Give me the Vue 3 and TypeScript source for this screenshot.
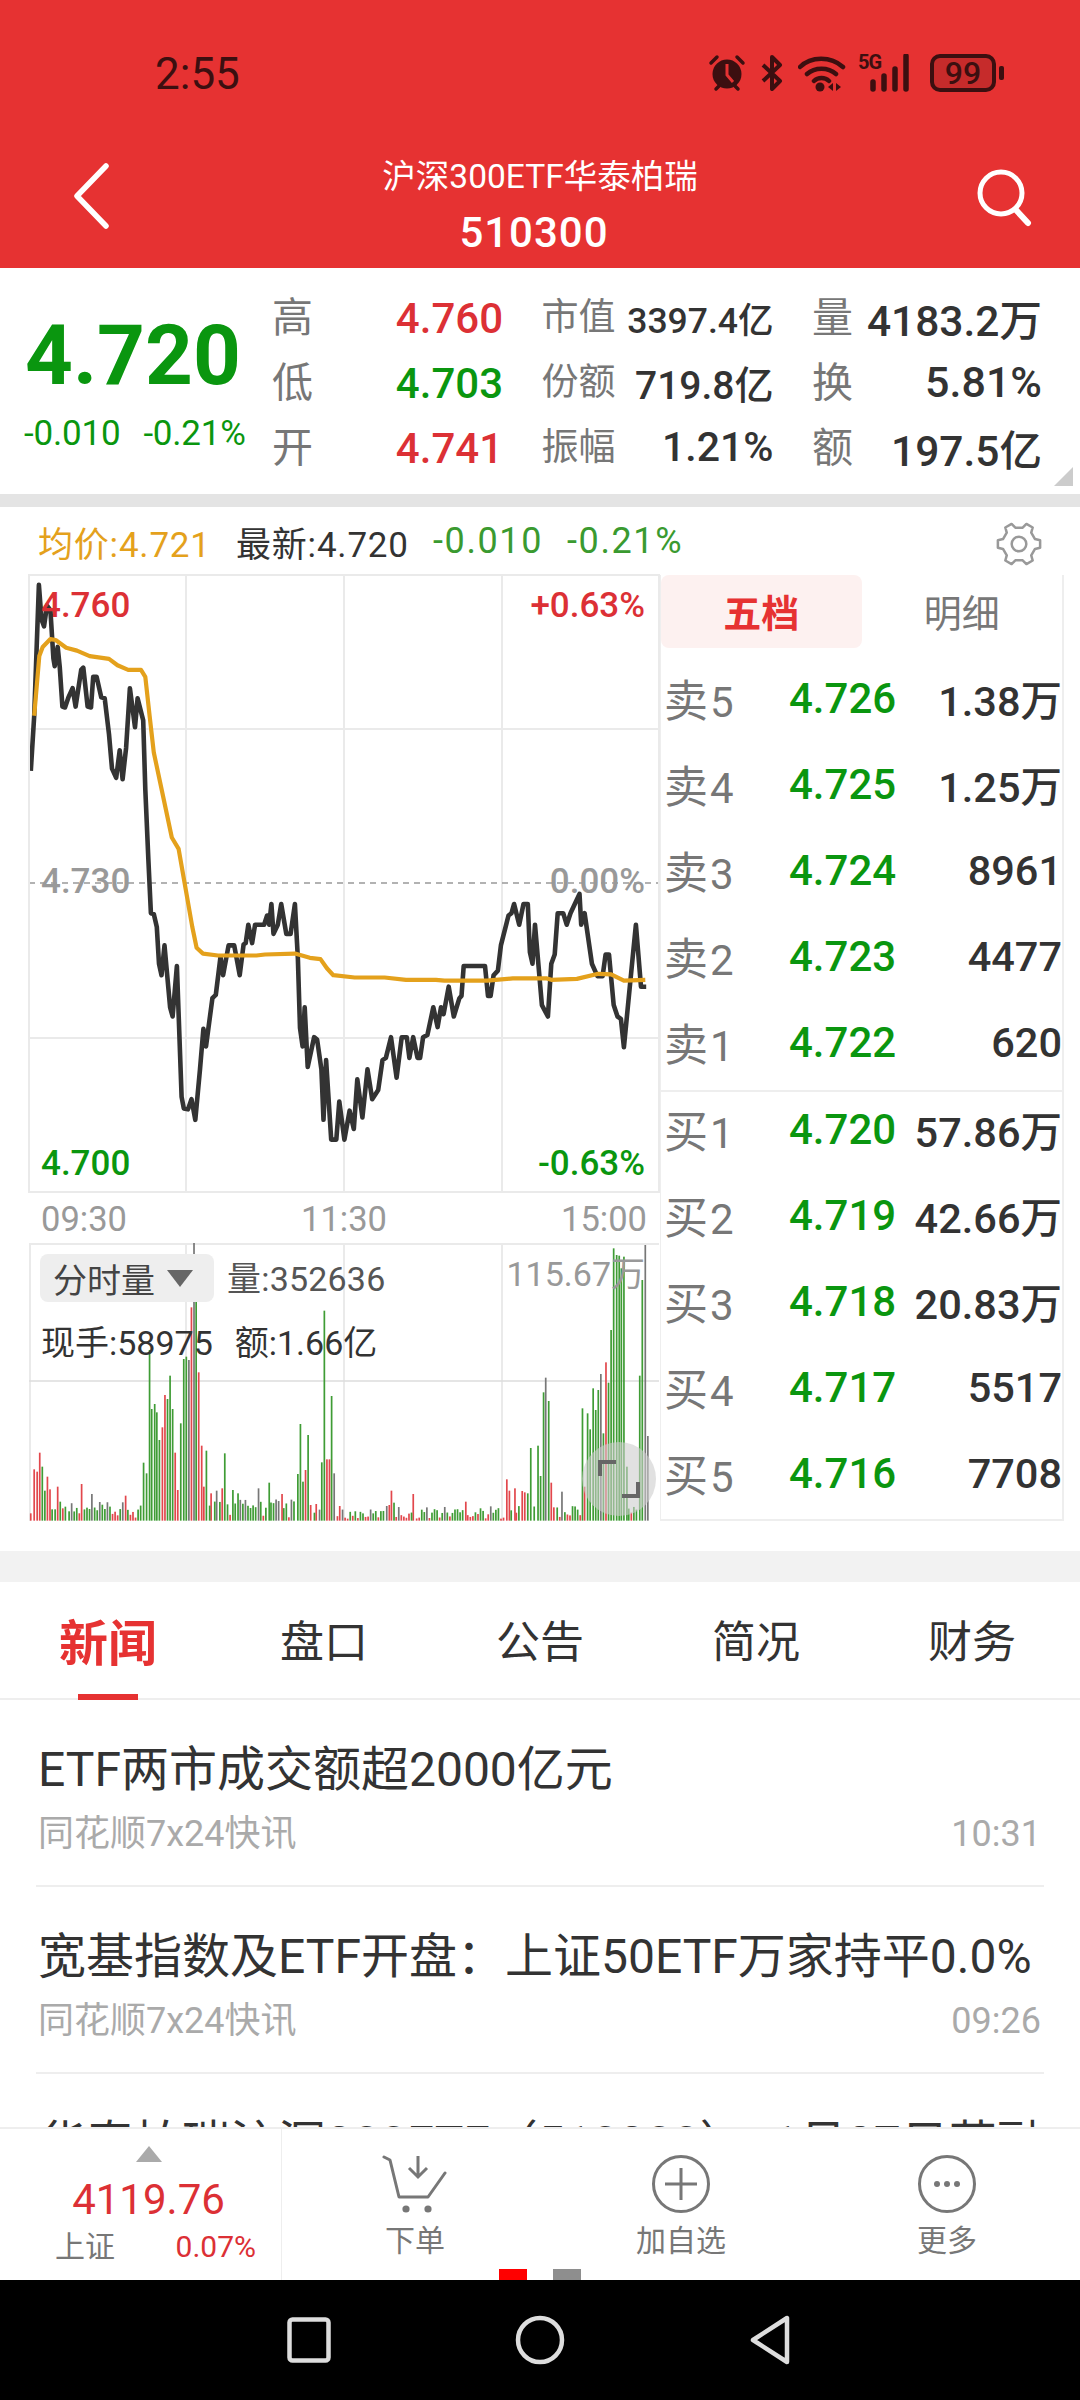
<script setup lang="ts">
type Pt = [number, number]
const blackRaw: Pt[] = [[72,590],[80,470],[91,185],[97,260],[103,275],[110,230],[118,240],[125,345],[128,362],[135,320],[140,365],[146,450],[152,452],[160,430],[170,410],[177,450],[190,370],[195,365],[205,450],[213,452],[218,385],[226,385],[237,430],[245,432],[255,510],[262,585],[272,605],[280,545],[287,608],[295,540],[304,410],[316,495],[322,432],[335,480],[340,630],[347,780],[353,900],[360,902],[367,930],[372,1010],[378,1035],[385,970],[398,1105],[404,1125],[414,1015],[425,1300],[430,1325],[440,1327],[448,1305],[457,1350],[468,1240],[476,1152],[482,1190],[497,1085],[505,1078],[516,995],[522,1035],[535,970],[548,970],[561,1035],[570,968],[575,965],[581,925],[590,965],[597,925],[618,925],[625,905],[630,925],[635,880],[640,945],[650,925],[658,880],[670,945],[680,945],[690,880],[697,1000],[702,1150],[708,1190],[713,1105],[720,1235],[735,1170],[742,1175],[752,1240],[757,1350],[763,1220],[775,1393],[787,1393],[794,1310],[806,1393],[818,1330],[828,1370],[836,1262],[848,1345],[860,1240],[871,1305],[885,1285],[895,1220],[903,1215],[915,1170],[928,1258],[940,1170],[952,1170],[958,1215],[967,1170],[977,1215],[983,1215],[990,1170],[1000,1165],[1014,1105],[1024,1148],[1032,1105],[1038,1120],[1050,1060],[1062,1125],[1075,1085],[1080,1080],[1085,1015],[1135,1015],[1142,1080],[1148,1080],[1155,1035],[1165,1025],[1172,970],[1190,905],[1197,900],[1203,880],[1215,925],[1225,880],[1235,880],[1240,985],[1246,1010],[1252,925],[1268,1100],[1282,1125],[1290,1010],[1298,990],[1305,900],[1318,900],[1326,925],[1335,900],[1345,880],[1356,858],[1360,925],[1368,900],[1385,1010],[1398,1037],[1410,1037],[1417,990],[1425,990],[1436,1100],[1445,1125],[1453,1130],[1460,1192],[1480,1000],[1488,925],[1500,1060],[1512,1060]]
const avgRaw: Pt[] = [[80,470],[92,340],[100,320],[118,303],[130,305],[155,322],[180,328],[210,340],[255,346],[275,360],[300,370],[330,370],[340,385],[350,470],[360,550],[385,660],[402,735],[418,760],[435,850],[450,930],[460,975],[475,988],[510,992],[600,992],[620,990],[690,988],[725,997],[750,1000],[765,1020],[780,1035],[830,1040],[900,1040],[950,1045],[1020,1045],[1040,1047],[1140,1047],[1200,1042],[1280,1042],[1290,1045],[1350,1043],[1400,1032],[1430,1033],[1460,1047],[1510,1045]]
const toPoints = (list: Pt[]): string =>
  list.map(([x, y]) => `${(x / 2.34).toFixed(1)},${(500 + y / 2.178).toFixed(1)}`).join(' ')
const blackLine = toPoints(blackRaw)
const avgLine = toPoints(avgRaw)

const RED = '#e2474c'
const GREEN = '#3f9c35'
const GRAY = '#777777'
const spikes: [number, number, string][] = [
  [70,940,RED],[78,808,RED],[85,815,RED],[91,758,RED],[97,800,GREEN],[103,872,GREEN],[109,830,RED],[115,868,RED],[120,928,GREEN],[127,928,GREEN],[133,860,RED],[139,905,GREEN],[145,925,RED],[151,920,GREEN],[189,852,RED],[213,882,GRAY],[292,887,RED],
  [334,788,GREEN],[341,820,GREEN],[348,450,GREEN],[353,627,GREEN],[360,612,GREEN],[365,637,GREEN],[371,720,GREEN],[378,682,RED],[384,585,RED],[390,597,GREEN],[396,527,GREEN],[402,627,GREEN],[408,758,RED],[414,870,RED],[421,670,GREEN],[428,477,GREEN],[434,470,GREEN],[440,480,GRAY],[446,322,RED],[452,128,GRAY],[457,285,GREEN],[463,517,RED],[470,737,RED],[475,860,RED],[481,752,GREEN],
  [492,880,RED],[505,872,GRAY],[518,865,RED],[524,760,GREEN],[543,870,GREEN],[555,880,GREEN],[603,865,GRAY],[628,848,GREEN],[658,882,RED],
  [695,822,GREEN],[701,672,GREEN],[707,845,GREEN],[713,810,RED],[719,705,GREEN],[725,915,RED],[738,912,RED],[751,787,GREEN],[757,332,GREEN],[763,778,RED],[769,778,RED],[774,588,GREEN],[780,820,GRAY],[793,918,RED],
  [903,918,GRAY],[909,915,RED],[914,872,RED],[920,908,GREEN],[965,882,RED],[1088,905,RED],[1184,838,RED],[1190,872,RED],[1203,865,RED],[1220,873,RED],[1226,877,RED],[1233,880,GREEN],[1240,744,GREEN],[1257,737,GREEN],[1263,828,GREEN],[1270,577,GREEN],[1275,533,GRAY],[1282,603,GREEN],[1288,848,RED],[1294,922,RED],[1313,875,GRAY],
  [1361,625,GREEN],[1366,860,RED],[1373,640,GREEN],[1379,688,GREEN],[1386,565,GREEN],[1392,630,GREEN],[1398,570,GREEN],[1404,522,GRAY],[1410,700,GREEN],[1416,487,RED],[1422,548,GREEN],[1428,390,GREEN],[1434,145,GREEN],[1441,165,GREEN],[1447,167,GREEN],[1452,205,GREEN],[1458,170,GREEN],[1465,800,GREEN],[1495,527,GREEN],[1501,240,GREEN],[1508,135,GRAY],[1514,708,GRAY]
]
const baseFor = (x: number): number => {
  if (x < 330) return 50
  if (x < 700) return 62
  if (x < 900) return 28
  if (x < 1180) return 38
  return 46
}
const bars = (() => {
  const out: { x: number; y: number; h: number; c: string }[] = []
  const push = (zx: number, top: number, c: string) =>
    out.push({ x: zx / 2.34, y: 1200 + top / 3, h: (962 - top) / 3, c })
  spikes.forEach(([x, t, c]) => push(x, t, c))
  for (let i = 0; i < 243; i++) {
    const zx = 70 + i * 5.98
    if (spikes.some(([x]) => Math.abs(x - zx) < 3.2)) continue
    const n = Math.abs(Math.sin(i * 12.9898) * 43758.5453) % 1
    const top = 962 - (6 + n * baseFor(zx))
    const c = n < 0.42 ? RED : n < 0.85 ? GREEN : GRAY
    push(zx, top, c)
  }
  return out
})()

const gearPath = (() => {
  const cx = 22
  const cy = 22
  const pts: string[] = []
  for (let i = 0; i < 6; i++) {
    const a = (Math.PI / 3) * i
    const spread = [-0.3, -0.17, 0.17, 0.3]
    const radii = [16, 20.5, 20.5, 16]
    spread.forEach((s, k) => {
      const r = radii[k]
      pts.push(`${(cx + r * Math.cos(a + s)).toFixed(1)},${(cy + r * Math.sin(a + s)).toFixed(1)}`)
    })
  }
  return pts.join(' ')
})()

const quoteRows = [
  { l1: '高', v1: '4.760', c1: 'red', l2: '市值', v2: '3397.4亿', s2: 'fs35', l3: '量', v3: '4183.2万', s3: 'fs42' },
  { l1: '低', v1: '4.703', c1: 'green', l2: '份额', v2: '719.8亿', s2: 'fs39', l3: '换', v3: '5.81%', s3: 'fs43' },
  { l1: '开', v1: '4.741', c1: 'red', l2: '振幅', v2: '1.21%', s2: 'fs41', l3: '额', v3: '197.5亿', s3: 'fs42' }
]
const sells = [
  { n: '卖', d: 5, p: '4.726', v: '1.38万' },
  { n: '卖', d: 4, p: '4.725', v: '1.25万' },
  { n: '卖', d: 3, p: '4.724', v: '8961' },
  { n: '卖', d: 2, p: '4.723', v: '4477' },
  { n: '卖', d: 1, p: '4.722', v: '620' }
]
const buys = [
  { n: '买', d: 1, p: '4.720', v: '57.86万' },
  { n: '买', d: 2, p: '4.719', v: '42.66万' },
  { n: '买', d: 3, p: '4.718', v: '20.83万' },
  { n: '买', d: 4, p: '4.717', v: '5517' },
  { n: '买', d: 5, p: '4.716', v: '7708' }
]
const tabs = ['新闻', '盘口', '公告', '简况', '财务']
const news = [
  { t: 'ETF两市成交额超2000亿元', s: '同花顺7x24快讯', m: '10:31' },
  { t: '宽基指数及ETF开盘\uFF1A上证50ETF万家持平0.0%', s: '同花顺7x24快讯', m: '09:26' }
]
const clippedTitle = '华泰柏瑞沪深300ETF\uFF08510300\uFF09\uFF1A1月27日获融'
</script>

<template>
  <div class="app">
    <header class="header">
      <div class="status">
        <span class="clock">2:55</span>
        <div class="status-icons">
          <svg class="ic-alarm" width="38" height="38" viewBox="0 0 38 38">
            <circle cx="19" cy="20" r="14.5" fill="#3c0f10" />
            <path d="M19 10v11l6 7" fill="none" stroke="#e63232" stroke-width="3" />
            <path d="M3 9l6-6M35 9l-6-6M8 35l3-3M30 35l-3-3" stroke="#3c0f10" stroke-width="3.5" stroke-linecap="round" />
          </svg>
          <svg class="ic-bt" width="24" height="38" viewBox="0 0 24 38">
            <path d="M3 11l17 16-8 8V3l8 8L3 27" fill="none" stroke="#3c0f10" stroke-width="4" stroke-linejoin="round" />
          </svg>
          <svg class="ic-wifi" width="48" height="38" viewBox="0 0 48 38">
            <path d="M2 13C13 2 33 2 45 13M9 20c8-7 21-7 29 0M16 27c4-4 11-4 15 0" fill="none" stroke="#3c0f10" stroke-width="4.5" stroke-linecap="round" />
            <circle cx="22" cy="33" r="4.5" fill="#3c0f10" />
            <path d="M35 29l-5 4 5 4zM38 29l5 4-5 4z" fill="#3c0f10" />
          </svg>
          <div class="sig">
            <span class="five-g">5G</span>
            <svg width="48" height="38" viewBox="0 0 48 38">
              <path d="M5 28v7M16 22v13M27 15v20M38 2v33" stroke="#3c0f10" stroke-width="5.5" stroke-linecap="round" fill="none" />
            </svg>
          </div>
          <div class="battery"><span class="batt-num">99</span></div>
          <span class="batt-tip"></span>
        </div>
      </div>
      <div class="nav">
        <svg class="nav-back" width="38" height="66" viewBox="0 0 38 66">
          <path d="M34 3L5 33l29 30" fill="none" stroke="#fff" stroke-width="5.5" stroke-linecap="round" stroke-linejoin="round" />
        </svg>
        <div class="nav-title">
          <div class="nav-name">沪深300ETF华泰柏瑞</div>
          <div class="nav-code">510300</div>
        </div>
        <svg class="nav-search" width="56" height="60" viewBox="0 0 56 60">
          <circle cx="25" cy="25" r="21" fill="none" stroke="#fff" stroke-width="5" />
          <path d="M40 42l12 13" stroke="#fff" stroke-width="6" stroke-linecap="round" />
        </svg>
      </div>
    </header>

    <section class="quote">
      <div class="big">
        <div class="big-price">4.720</div>
        <div class="big-sub"><span>-0.010</span><span>-0.21%</span></div>
      </div>
      <div class="qgrid">
        <div v-for="r in quoteRows" :key="r.l1" class="qrow">
          <div class="qcell">
            <span class="ql big-l">{{ r.l1 }}</span><span class="qv1" :class="r.c1">{{ r.v1 }}</span>
          </div>
          <div class="qcell">
            <span class="ql">{{ r.l2 }}</span><span class="qv" :class="r.s2">{{ r.v2 }}</span>
          </div>
          <div class="qcell">
            <span class="ql big-l">{{ r.l3 }}</span><span class="qv" :class="r.s3">{{ r.v3 }}</span>
          </div>
        </div>
      </div>
      <span class="corner"></span>
    </section>
    <div class="band"></div>

    <section class="market">
      <div class="info">
        <span class="i-avg">均价:4.721</span>
        <span class="i-new">最新:4.720</span>
        <span class="i-d1">-0.010</span>
        <span class="i-d2">-0.21%</span>
        <svg class="gear" width="46" height="46" viewBox="0 0 44 44">
          <polygon :points="gearPath" fill="none" stroke="#999" stroke-width="2.4" stroke-linejoin="round" />
          <circle cx="22" cy="22" r="7" fill="none" stroke="#999" stroke-width="2.4" />
        </svg>
      </div>
      <div class="board">
        <div class="charts">
          <div class="price-chart">
            <svg class="fill-svg" width="630" height="617" viewBox="29 575 630 617">
              <g stroke="#eaeaea" stroke-width="2">
                <path d="M186 575V1192M344 575V1192M502 575V1192M29 729H659M29 1038H659" fill="none" />
              </g>
              <path d="M29 883H659" stroke="#999" stroke-width="1.6" stroke-dasharray="6 5" fill="none" />
              <polyline :points="blackLine" fill="none" stroke="#333" stroke-width="4.6" stroke-linejoin="round" />
              <polyline :points="avgLine" fill="none" stroke="#e4a11c" stroke-width="4.2" stroke-linejoin="round" />
            </svg>
            <div class="labels">
              <div class="lab-row"><span class="red">4.760</span><span class="red">+0.63%</span></div>
              <div class="lab-row gray"><span>4.730</span><span>0.00%</span></div>
              <div class="lab-row"><span class="green">4.700</span><span class="green">-0.63%</span></div>
            </div>
          </div>
          <div class="times"><span>09:30</span><span>11:30</span><span>15:00</span></div>
          <div class="vol-chart">
            <svg class="fill-svg" width="630" height="278" viewBox="29 1243 630 278">
              <path d="M186 1243V1521M344 1243V1521M502 1243V1521" stroke="#eaeaea" stroke-width="2" fill="none" />
              <path d="M29 1381H659" stroke="#ddd" stroke-width="1.5" fill="none" />
              <rect v-for="(b, i) in bars" :key="i" :x="b.x" :y="b.y" width="1.7" :height="b.h" :fill="b.c" />
            </svg>
            <div class="vol-top">
              <div class="chip">分时量<i class="chip-tri"></i></div>
              <span class="vol-q">量:352636</span>
              <span class="vol-max">115.67万</span>
            </div>
            <div class="vol-sub"><span>现手:58975</span><span>额:1.66亿</span></div>
            <div class="expand">
              <svg width="42" height="40" viewBox="0 0 42 40">
                <path d="M2 17V3h16M40 23v14H24" fill="none" stroke="#666" stroke-width="4" />
              </svg>
            </div>
          </div>
        </div>

        <div class="book">
          <div class="book-tabs">
            <div class="btab on">五档</div>
            <div class="btab">明细</div>
          </div>
          <div class="sell">
            <div v-for="o in sells" :key="o.p" class="order">
              <span class="o-l">{{ o.n }}<em>{{ o.d }}</em></span>
              <span class="o-p">{{ o.p }}</span>
              <span class="o-v">{{ o.v }}</span>
            </div>
          </div>
          <div class="buy">
            <div v-for="o in buys" :key="o.p" class="order">
              <span class="o-l">{{ o.n }}<em>{{ o.d }}</em></span>
              <span class="o-p">{{ o.p }}</span>
              <span class="o-v">{{ o.v }}</span>
            </div>
          </div>
        </div>
      </div>
    </section>
    <div class="band2"></div>

    <nav class="tabs">
      <div v-for="(t, i) in tabs" :key="t" class="tab" :class="{ active: i === 0 }">{{ t }}</div>
    </nav>

    <div class="news">
      <article v-for="n in news" :key="n.m" class="item">
        <h3 class="item-t">{{ n.t }}</h3>
        <div class="item-s"><span>{{ n.s }}</span><span>{{ n.m }}</span></div>
      </article>
      <article class="item">
        <h3 class="item-t">{{ clippedTitle }}</h3>
      </article>
    </div>

    <footer class="bar">
      <div class="index">
        <i class="idx-tri"></i>
        <div class="idx-val">4119.76</div>
        <div class="idx-row"><span class="idx-n">上证</span><span class="idx-p">0.07%</span></div>
      </div>
      <div class="act">
        <svg width="66" height="60" viewBox="0 0 66 60">
          <path d="M2 3l6 3 9 37h29l17-24" fill="none" stroke="#777" stroke-width="3" stroke-linejoin="round" stroke-linecap="round" />
          <path d="M36 2v20M27 14l9 9 9-9" fill="none" stroke="#777" stroke-width="3" />
          <circle cx="24" cy="55" r="3.6" fill="#777" />
          <circle cx="46" cy="55" r="3.6" fill="#777" />
        </svg>
        <span>下单</span>
      </div>
      <div class="act">
        <svg width="60" height="60" viewBox="0 0 60 60">
          <circle cx="30" cy="30" r="27.5" fill="none" stroke="#777" stroke-width="3" />
          <path d="M30 14v32M14 30h32" stroke="#777" stroke-width="3" />
        </svg>
        <span>加自选</span>
      </div>
      <div class="act">
        <svg width="60" height="60" viewBox="0 0 60 60">
          <circle cx="30" cy="30" r="27.5" fill="none" stroke="#777" stroke-width="3" />
          <circle cx="20" cy="30" r="3" fill="#777" />
          <circle cx="30" cy="30" r="3" fill="#777" />
          <circle cx="40" cy="30" r="3" fill="#777" />
        </svg>
        <span>更多</span>
      </div>
      <div class="dots"><i class="dot-on"></i><i class="dot-off"></i></div>
    </footer>

    <div class="sysnav">
      <svg width="44" height="46" viewBox="0 0 44 46">
        <rect x="2.5" y="2.5" width="39" height="41" rx="3" fill="none" stroke="#ddd" stroke-width="4.5" />
      </svg>
      <svg width="50" height="50" viewBox="0 0 50 50">
        <circle cx="25" cy="25" r="22" fill="none" stroke="#ddd" stroke-width="4.5" />
      </svg>
      <svg width="42" height="50" viewBox="0 0 42 50">
        <path d="M38 3v44L4 25z" fill="none" stroke="#ddd" stroke-width="4.5" stroke-linejoin="round" />
      </svg>
    </div>
  </div>
</template>

<style scoped>
.app {
  width: 1080px;
  height: 2400px;
  display: flex;
  flex-direction: column;
  overflow: hidden;
  position: relative;
  background: #fff;
  font-family: Roboto, "Noto Sans CJK SC", sans-serif;
  color: #333;
}
.red { color: #dc3035; }
.green { color: #0a960f; }
.gray { color: #999; }

.header { height: 268px; background: #e63232; flex: none; }
.status {
  height: 146px;
  display: flex;
  align-items: center;
  justify-content: space-between;
  padding: 0 76px 0 155px;
  color: #3c0f10;
}
.clock { font-size: 44px; line-height: 1; padding-top: 2px; }
.status-icons { display: flex; align-items: center; }
.ic-bt { margin-left: 14px; }
.ic-wifi { margin-left: 14px; }
.sig { position: relative; margin-left: 12px; width: 58px; height: 38px; display: flex; justify-content: flex-end; }
.five-g {
  position: absolute;
  left: 0;
  top: -3px;
  font-size: 20px;
  line-height: 22px;
  font-weight: 700;
  letter-spacing: -1px;
}
.battery {
  margin-left: 14px;
  width: 66px;
  height: 38px;
  box-sizing: border-box;
  border: 4px solid #3c0f10;
  border-radius: 10px;
  background: #c62b2b;
  display: flex;
  align-items: center;
  justify-content: center;
}
.batt-num { font-size: 32px; line-height: 1; font-weight: 500; color: #3c0f10; }
.batt-tip { width: 5px; height: 14px; margin-left: 3px; background: #3c0f10; border-radius: 2px; }

.nav {
  height: 122px;
  display: grid;
  grid-template-columns: 1fr auto 1fr;
  padding: 0 60px;
}
.nav-back { margin-top: 17px; margin-left: 12px; }
.nav-search { margin-top: 22px; justify-self: end; margin-right: -12px; }
.nav-title { text-align: center; color: #fff; }
.nav-name { font-size: 33.5px; line-height: 44px; padding-top: 9px; }
.nav-code { font-size: 42px; line-height: 46px; margin-top: 11px; font-weight: 500; letter-spacing: 1px; padding-right: 12px; }

.quote { height: 226px; flex: none; display: flex; position: relative; }
.big { width: 272px; flex: none; box-sizing: border-box; padding: 44px 0 0 24px; }
.big-price { font-size: 83.5px; line-height: 88px; font-weight: 700; color: #0a960f; margin-left: 1px; }
.big-sub {
  display: flex;
  gap: 23px;
  margin-top: 16px;
  font-size: 35px;
  line-height: 36px;
  letter-spacing: -0.2px;
  color: #0a960f;
}
.qgrid { padding-top: 18px; width: 770px; }
.qrow { display: grid; grid-template-columns: 231px 232px 230px; column-gap: 38.5px; height: 65px; align-items: center; }
.qcell { display: flex; justify-content: space-between; align-items: center; }
.ql { font-size: 37px; color: #777; line-height: 1.2; }
.big-l { font-size: 41px; }
.qv1 { font-size: 42px; font-weight: 500; }
.qv { font-weight: 500; color: #333; margin-top: -3px; }
.fs35 { font-size: 35.5px; }
.fs39 { font-size: 39px; }
.fs41 { font-size: 41px; }
.fs42 { font-size: 42.5px; }
.fs43 { font-size: 43px; }
.corner {
  position: absolute;
  right: 7px;
  bottom: 8px;
  width: 0;
  height: 0;
  border-left: 19px solid transparent;
  border-bottom: 19px solid #ccc;
}
.band { height: 13px; background: #e4e4e4; flex: none; }

.market { height: 1044px; flex: none; box-sizing: border-box; padding-left: 29px; }
.info {
  height: 68px;
  display: flex;
  align-items: center;
  font-size: 35px;
  margin-left: 9px;
  position: relative;
  letter-spacing: 0.8px;
}
.i-avg { color: #e4a11c; width: 198px; }
.i-new { color: #333; width: 197px; }
.i-d1 { color: #3a9a30; width: 134px; letter-spacing: 1.6px; font-size: 36px; }
.i-d2 { color: #3a9a30; letter-spacing: 1.6px; font-size: 36px; }
.gear { position: absolute; left: 958px; top: 14px; }

.board { display: flex; align-items: flex-start; }
.charts { width: 631px; flex: none; }
.price-chart {
  width: 630px;
  height: 617px;
  position: relative;
  outline: 2px solid #eaeaea;
  outline-offset: -1px;
}
.fill-svg { display: block; }
.labels {
  position: absolute;
  inset: 0;
  padding: 10px 14px 7px 12px;
  display: flex;
  flex-direction: column;
  justify-content: space-between;
  font-size: 35px;
  font-weight: 500;
  line-height: 42px;
  box-sizing: border-box;
}
.lab-row { display: flex; justify-content: space-between; }
.lab-row.gray { font-weight: 500; margin-top: -7px; }

.times {
  height: 51px;
  display: flex;
  justify-content: space-between;
  align-items: center;
  padding: 2px 13px 0 12px;
  font-size: 34.5px;
  color: #999;
  box-sizing: border-box;
}
.vol-chart {
  width: 630px;
  height: 278px;
  position: relative;
  box-shadow: inset 2px 2px 0 #eaeaea;
}
.vol-top {
  position: absolute;
  left: 11px;
  top: 11px;
  right: 14px;
  display: flex;
  align-items: center;
  font-size: 34px;
}
.chip {
  width: 174px;
  height: 48px;
  background: #eee;
  border-radius: 8px;
  display: flex;
  align-items: center;
  box-sizing: border-box;
  padding-left: 13px;
  color: #444;
}
.chip-tri {
  width: 0;
  height: 0;
  margin-left: 12px;
  border-left: 13px solid transparent;
  border-right: 13px solid transparent;
  border-top: 17px solid #666;
}
.vol-q { color: #555; margin-left: 13px; margin-top: -3px; letter-spacing: 0.2px; }
.vol-max { color: #999; margin-left: auto; margin-top: -14px; }
.vol-sub {
  position: absolute;
  left: 12px;
  top: 78px;
  display: flex;
  gap: 22px;
  font-size: 34px;
  line-height: 44px;
  color: #333;
}
.expand {
  position: absolute;
  left: 553px;
  top: 199px;
  width: 74px;
  height: 74px;
  border-radius: 50%;
  background: rgba(205, 205, 205, 0.6);
  display: flex;
  align-items: center;
  justify-content: center;
}

.book {
  width: 404px;
  flex: none;
  height: 946px;
  box-sizing: border-box;
  border-left: 1px solid #eee;
  border-right: 2px solid #eee;
  border-bottom: 2px solid #eee;
}
.book-tabs { height: 80px; display: flex; align-items: flex-start; }
.btab {
  width: 201px;
  height: 73px;
  display: flex;
  align-items: center;
  justify-content: center;
  font-size: 38px;
  color: #777;
  border-radius: 8px;
  padding-bottom: 2px;
  box-sizing: border-box;
}
.btab.on { background: #fdf1f0; color: #e63232; font-weight: 700; }
.sell { padding-bottom: 5px; border-bottom: 2px solid #eee; }
.buy { margin-top: -6px; }
.order {
  height: 86px;
  display: grid;
  grid-template-columns: 125px 108px 1fr;
  align-items: center;
  padding: 0 0 0 3px;
}
.o-l { font-size: 44px; color: #777; white-space: nowrap; }
.o-l em { font-style: normal; margin-left: 2px; font-size: 42px; }
.o-p { font-size: 42px; font-weight: 500; color: #0a960f; }
.o-v { font-size: 41.5px; font-weight: 500; color: #333; text-align: right; }

.band2 { height: 31px; background: #f2f2f2; flex: none; }
.tabs {
  height: 118px;
  flex: none;
  box-sizing: border-box;
  display: grid;
  grid-template-columns: repeat(5, 216px);
  border-bottom: 2px solid #eee;
}
.tab {
  display: flex;
  align-items: center;
  justify-content: center;
  font-size: 44px;
  color: #333;
  position: relative;
  padding-bottom: 2px;
}
.tab.active { color: #e63232; font-weight: 700; font-size: 49px; }
.tab.active::after {
  content: "";
  position: absolute;
  left: 78px;
  bottom: -2px;
  width: 60px;
  height: 6px;
  background: #e63232;
}
.news { flex: 1; min-height: 0; overflow: hidden; padding: 0 36px; }
.item {
  height: 187px;
  box-sizing: border-box;
  padding: 40px 3px 0 2px;
  border-bottom: 2px solid #eee;
}
.item-t { margin: 0; font-size: 48px; line-height: 60px; font-weight: 400; color: #333; white-space: nowrap; }
.item-s {
  display: flex;
  justify-content: space-between;
  margin-top: 14px;
  font-size: 36px;
  line-height: 40px;
  color: #aaa;
}

.bar {
  height: 153px;
  flex: none;
  display: flex;
  position: relative;
  background: #fff;
  border-top: 2px solid #eee;
  box-sizing: border-box;
}
.index {
  width: 282px;
  flex: none;
  box-sizing: border-box;
  border-right: 1px solid #eee;
  display: flex;
  flex-direction: column;
  align-items: center;
  padding-top: 17px;
}
.idx-tri {
  width: 0;
  height: 0;
  margin-left: 16px;
  border-left: 13px solid transparent;
  border-right: 13px solid transparent;
  border-bottom: 16px solid #aaa;
}
.idx-val { font-size: 42px; line-height: 44px; margin-top: 16px; margin-left: 16px; color: #dc3035; }
.idx-row {
  width: 100%;
  box-sizing: border-box;
  display: flex;
  justify-content: space-between;
  padding: 0 25px 0 55px;
  margin-top: 9px;
  font-size: 30px;
  line-height: 32px;
}
.idx-n { color: #777; }
.idx-p { color: #dc3035; }
.act {
  flex: 1;
  display: flex;
  flex-direction: column;
  align-items: center;
  padding-top: 25px;
  font-size: 30px;
  color: #777;
}
.act span { line-height: 34px; margin-top: 10px; }
.dots { position: absolute; left: 499px; bottom: 0; display: flex; gap: 26px; }
.dots i { display: block; width: 28px; height: 11px; }
.dot-on { background: #f00; }
.dot-off { background: #8e8e8e; }

.sysnav {
  height: 120px;
  flex: none;
  background: #000;
  display: flex;
  align-items: center;
  padding-left: 287px;
}
.sysnav svg:nth-child(2) { margin-left: 184px; }
.sysnav svg:nth-child(3) { margin-left: 184px; }
</style>
